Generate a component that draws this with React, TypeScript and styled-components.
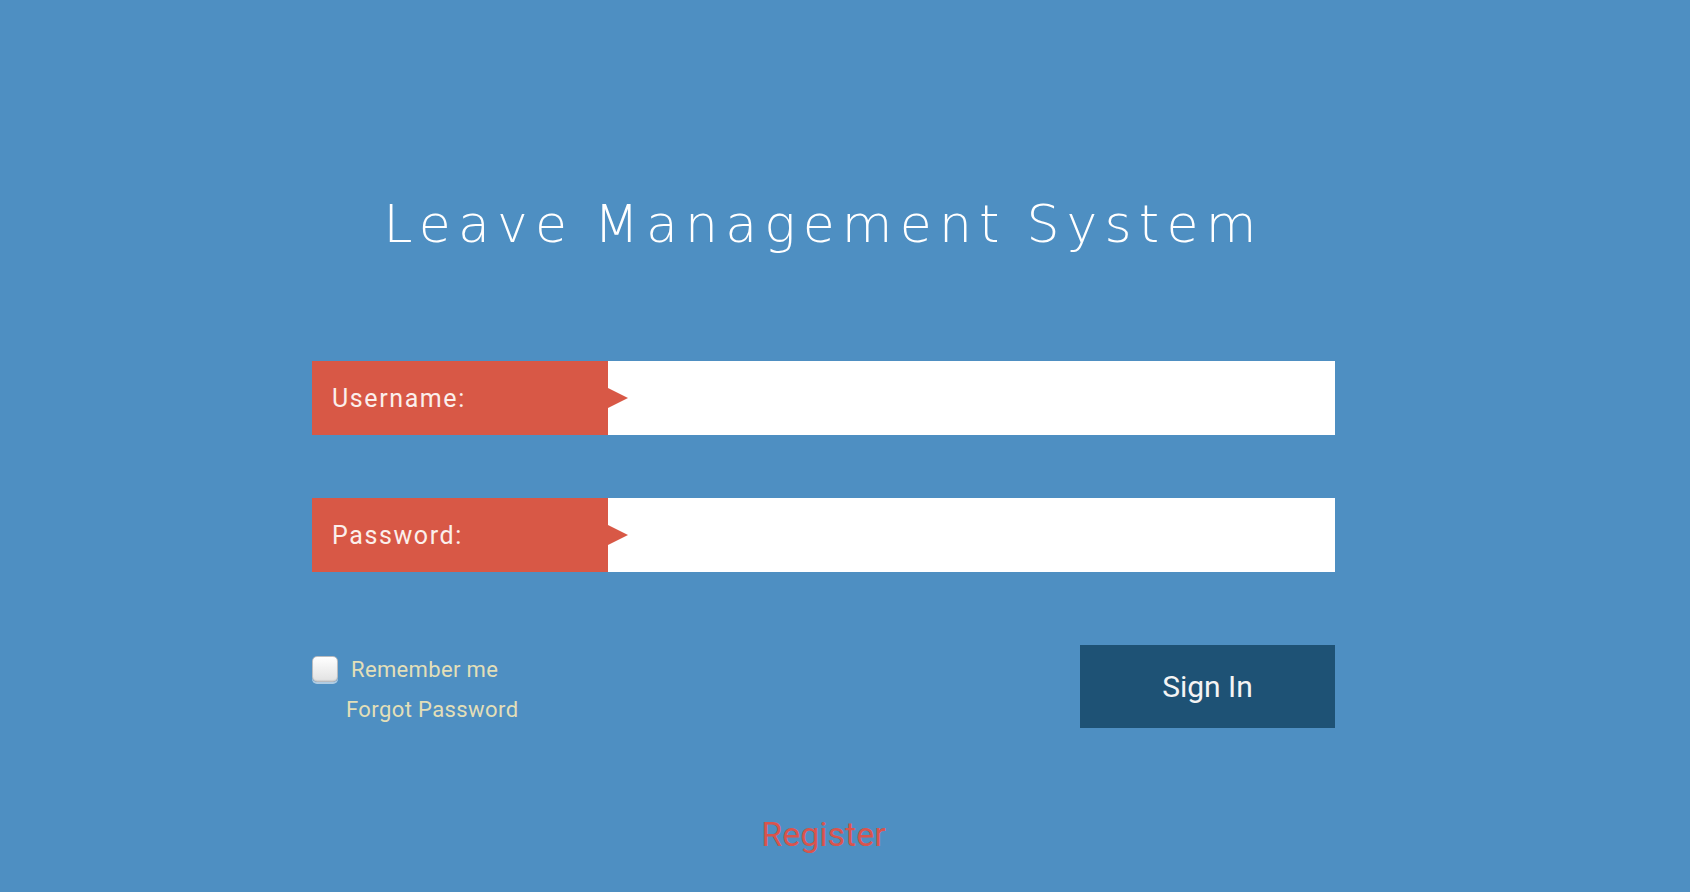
import React, { useState } from 'react';
import styled, { createGlobalStyle } from 'styled-components';

const GlobalStyle = createGlobalStyle`
  html, body {
    margin: 0;
    padding: 0;
    background: #4e8fc2;
  }
  body {
    font-family: Roboto, "Liberation Sans", sans-serif;
  }
`;

const App: React.FC = () => {
  const [username, setUsername] = useState('');
  const [password, setPassword] = useState('');
  const [remember, setRemember] = useState(false);

  return (
    <>
      <GlobalStyle />
      <Page>
        <Title>Leave Management System</Title>

        <Form onSubmit={(e) => e.preventDefault()}>
          <FieldRow>
            <FieldLabel htmlFor="username">Username:</FieldLabel>
            <FieldInput id="username" type="text" value={username} onChange={(e) => setUsername(e.target.value)} />
          </FieldRow>
          <FieldRow>
            <FieldLabel htmlFor="password">Password:</FieldLabel>
            <FieldInput id="password" type="password" value={password} onChange={(e) => setPassword(e.target.value)} />
          </FieldRow>

          <ActionsRow>
            <Options>
              <RememberLabel>
                <Checkbox type="checkbox" checked={remember} onChange={() => setRemember(!remember)} />
                Remember me
              </RememberLabel>
              <ForgotLink href="#">Forgot Password</ForgotLink>
            </Options>
            <SignInButton type="submit">Sign In</SignInButton>
          </ActionsRow>
        </Form>

        <RegisterLink href="#">Register</RegisterLink>
      </Page>
    </>
  );
};

// --- Styled Components ---
const Page = styled.div`
  min-height: 100vh;
  box-sizing: border-box;
  display: flex;
  flex-direction: column;
  align-items: center;
  padding: 194px 43px 0 0;
`;

const Title = styled.h1`
  margin: 0;
  font-family: "DejaVu Sans", sans-serif;
  font-weight: 200;
  font-size: 52px;
  line-height: 60px;
  letter-spacing: 7.2px;
  word-spacing: -4px;
  color: #ffffff;
`;

const Form = styled.form`
  width: 1023px;
  margin-top: 107px;
  display: flex;
  flex-direction: column;
  gap: 63px;
`;

const FieldRow = styled.div`
  display: flex;
  height: 74px;
`;

const FieldLabel = styled.label`
  position: relative;
  flex: 0 0 296px;
  box-sizing: border-box;
  display: flex;
  align-items: center;
  padding-left: 20px;
  background: #d85846;
  color: #fbefec;
  font-size: 25px;
  letter-spacing: 1.6px;

  &::after {
    content: '';
    position: absolute;
    right: -20px;
    top: 50%;
    transform: translateY(-50%);
    border-left: 20px solid #d85846;
    border-top: 10.5px solid transparent;
    border-bottom: 10.5px solid transparent;
  }
`;

const FieldInput = styled.input`
  flex: 1;
  min-width: 0;
  border: none;
  outline: none;
  background: #ffffff;
  padding: 0 36px;
  font-family: Roboto, sans-serif;
  font-size: 24px;
`;

const ActionsRow = styled.div`
  display: flex;
  justify-content: space-between;
  align-items: flex-start;
  margin-top: 10px;
`;

const Options = styled.div`
  display: flex;
  flex-direction: column;
  padding-top: 10px;
`;

const RememberLabel = styled.label`
  display: flex;
  align-items: center;
  gap: 13px;
  height: 28px;
  color: #e3dfb8;
  font-size: 22px;
  letter-spacing: 0.35px;
  cursor: pointer;
`;

const Checkbox = styled.input`
  appearance: none;
  margin: 0;
  width: 26px;
  height: 26px;
  border-radius: 5px;
  border: 1px solid #b9bcc0;
  background: linear-gradient(#ffffff, #e2e2e2);
  box-shadow: 0 2px 0 rgba(255, 255, 255, 0.55), inset 0 -1px 1px rgba(0, 0, 0, 0.08);
  cursor: pointer;

  &:checked {
    background: linear-gradient(#ffffff, #d0d0d0);
  }
`;

const ForgotLink = styled.a`
  margin: 14px 0 0 34px;
  line-height: 26px;
  color: #e3dfb8;
  font-size: 22px;
  letter-spacing: 0.4px;
  text-decoration: none;
`;

const SignInButton = styled.button`
  width: 255px;
  height: 83px;
  border: none;
  background: #1e5275;
  color: #f4f4f4;
  font-family: Roboto, sans-serif;
  font-size: 30px;
  cursor: pointer;
`;

const RegisterLink = styled.a`
  margin-top: 86px;
  line-height: 40px;
  font-size: 34px;
  color: #d9544d;
  text-decoration: none;
`;

export default App;
